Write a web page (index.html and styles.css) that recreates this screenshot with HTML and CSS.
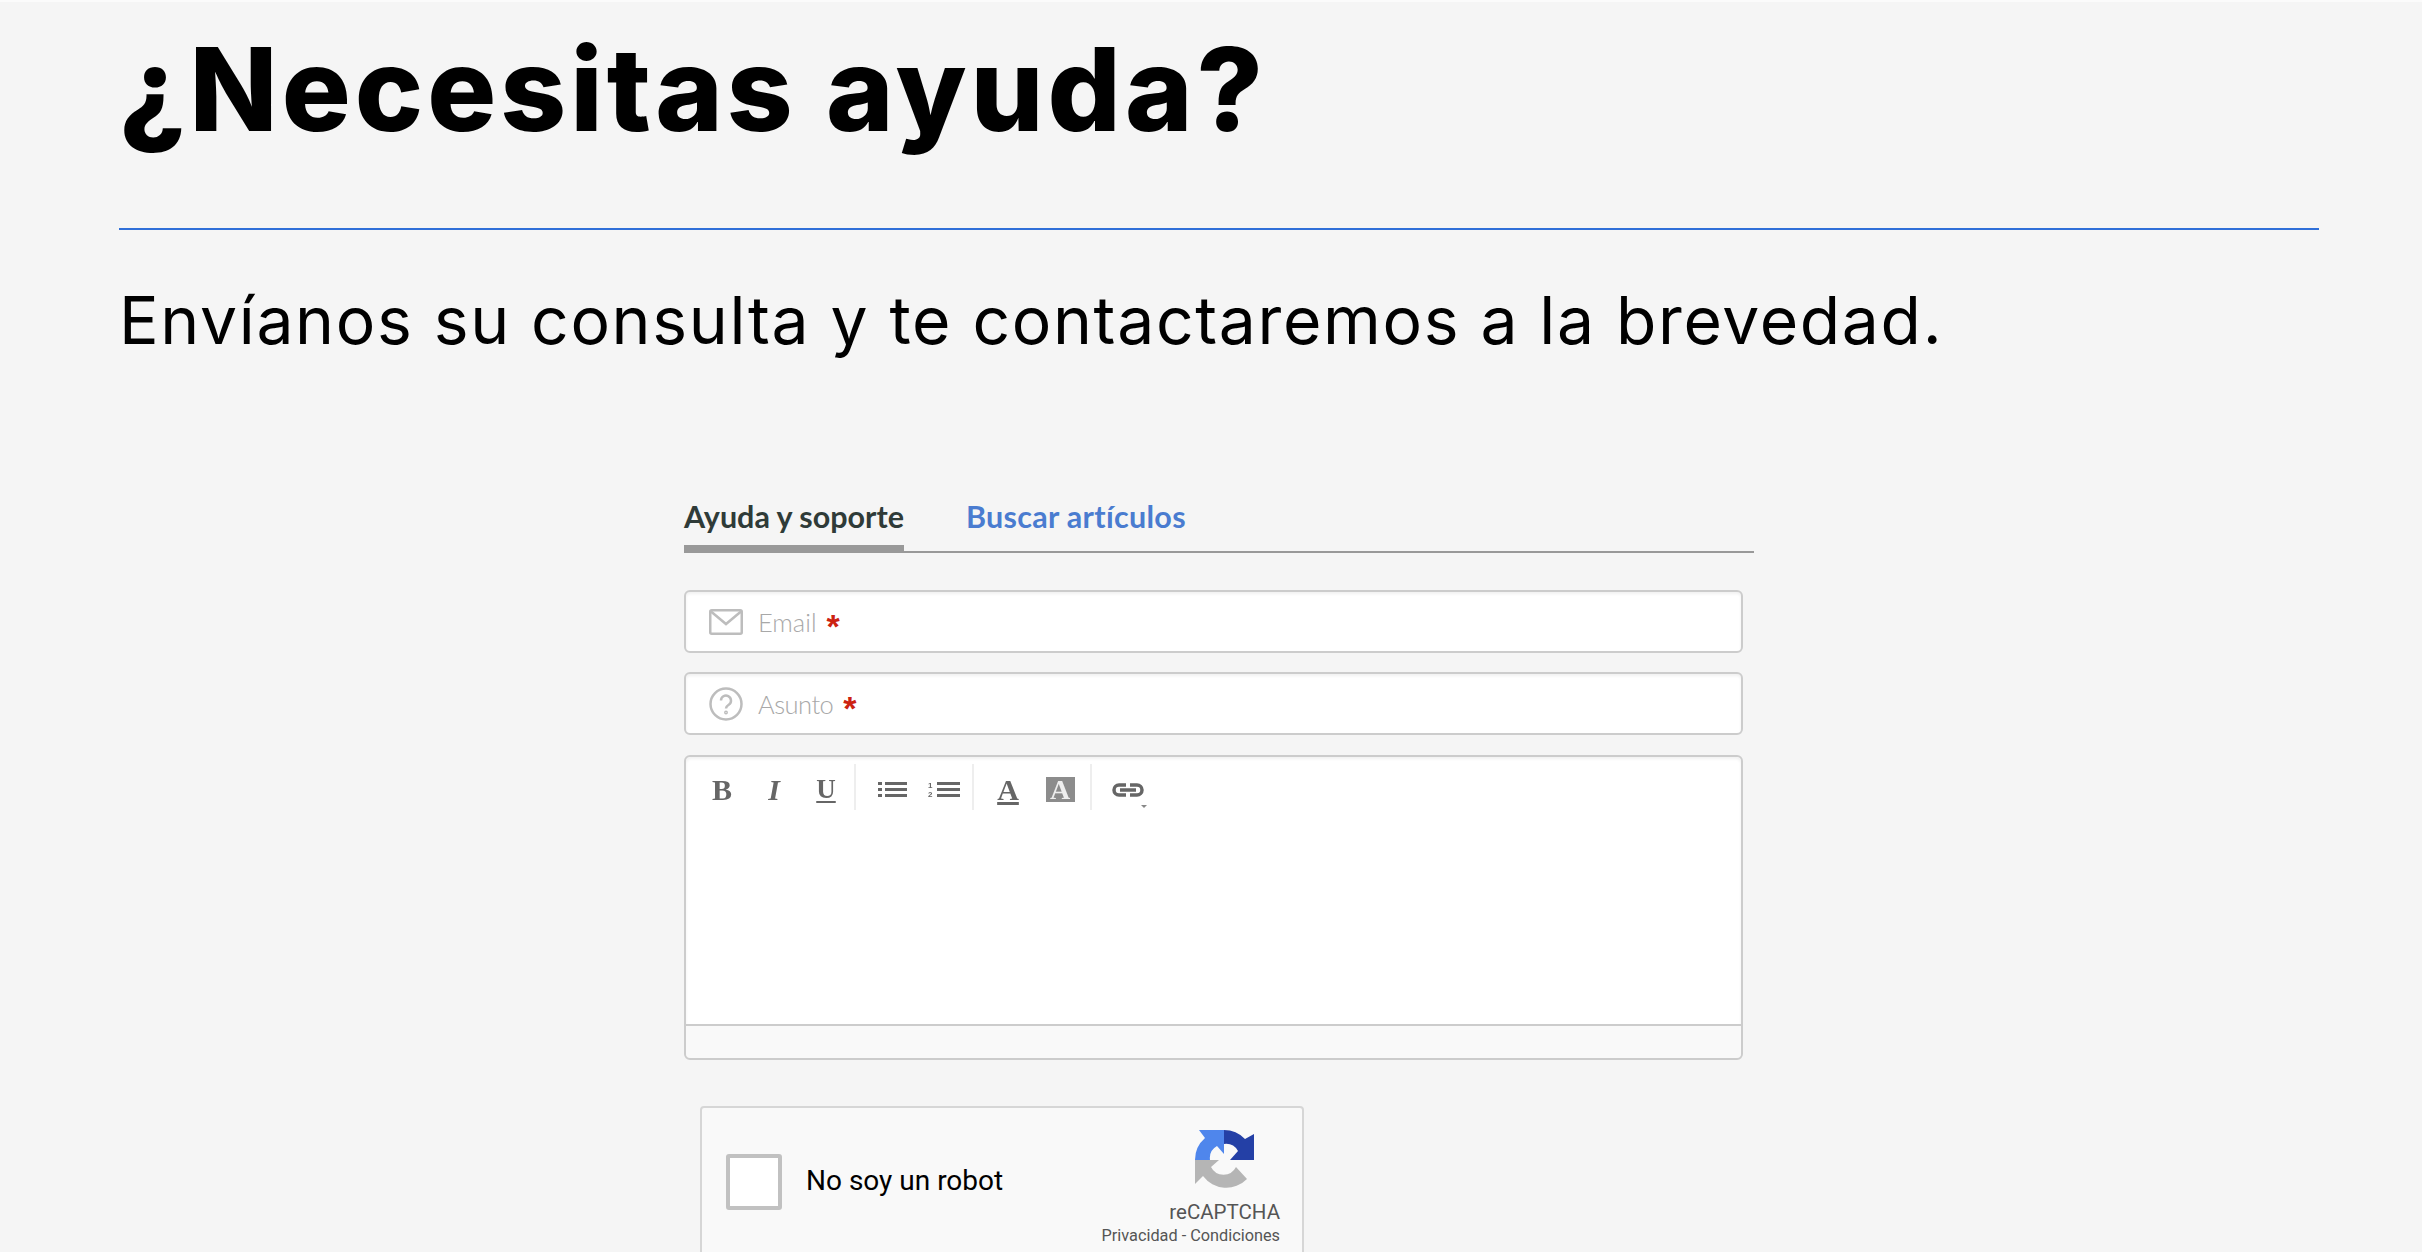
FILE: index.html
```html
<!DOCTYPE html>
<html lang="es">
  <head>
    <meta charset="utf-8">
    <title>¿Necesitas ayuda?</title>
    <link rel="stylesheet" href="styles.css">
  </head>
  <body>
    <div class="intro">
      <h1 class="title">¿Necesitas ayuda?</h1>
      <div class="rule"></div>
      <p class="lead">Envíanos su consulta y te contactaremos a la brevedad.</p>
    </div>

    <div class="widget">
      <div class="tabs">
        <div class="tab tab-active">Ayuda y soporte</div>
        <div class="tab tab-link">Buscar artículos</div>
      </div>

      <div class="field">
        <svg class="field-icon" width="34" height="26" viewBox="0 0 34 26" fill="none" stroke="#bdbdbd" stroke-width="2.500">
          <rect x="1.250" y="1.250" width="31.500" height="23.500" rx="1.500"/>
          <path d="M2 2.500 17 15 32 2.500"/>
        </svg>
        <span class="placeholder">Email</span>
        <span class="req">*</span>
      </div>
      <div class="field">
        <svg class="field-icon" width="34" height="34" viewBox="0 0 34 34" fill="none" stroke="#bdbdbd" stroke-width="2.500">
          <circle cx="17" cy="17" r="15.500"/>
          <path d="M12 13.500a5 5 0 1 1 8 4c-1.800 1.200-3 2-3 4"/>
          <circle cx="17" cy="25.500" r="0.700"/>
        </svg>
        <span class="placeholder placeholder-tight">Asunto</span>
        <span class="req">*</span>
      </div>

      <div class="editor">
        <div class="editor-area">
          <div class="toolbar">
            <div class="tool-group group-first">
              <span class="tool tool-letter">B</span>
              <span class="tool tool-letter tool-italic">I</span>
              <span class="tool tool-letter tool-under">U</span>
            </div>
            <div class="tool-group group-list">
              <span class="tool">
                <svg width="29" height="17" viewBox="0 0 29 17" fill="#666">
                  <rect x="0" y="1" width="4" height="3"/><rect x="7" y="1" width="22" height="3"/>
                  <rect x="0" y="7" width="4" height="3"/><rect x="7" y="7" width="22" height="3"/>
                  <rect x="0" y="13" width="4" height="3"/><rect x="7" y="13" width="22" height="3"/>
                </svg>
              </span>
              <span class="tool">
                <svg width="32" height="17" viewBox="0 0 32 17" fill="#666">
                  <text x="0" y="7" font-family="Liberation Sans" font-size="8" font-weight="700">1</text>
                  <text x="0" y="16" font-family="Liberation Sans" font-size="8" font-weight="700">2</text>
                  <rect x="9" y="1" width="23" height="3"/><rect x="9" y="7" width="23" height="3"/>
                  <rect x="9" y="13" width="23" height="3"/>
                </svg>
              </span>
            </div>
            <div class="tool-group group-color">
              <span class="tool tool-letter tool-fore">A</span>
              <span class="tool"><span class="tool-back">A</span></span>
            </div>
            <div class="tool-group group-link">
              <span class="tool">
                <svg width="34" height="16" viewBox="0 0 34 16" fill="none" stroke="#666" stroke-width="3.500">
                  <path d="M15 3H8a5 5 0 0 0 0 10h7"/>
                  <path d="M19 3h7a5 5 0 0 1 0 10h-7"/>
                  <path d="M9 8h16"/>
                </svg>
                <span class="caret"></span>
              </span>
            </div>
          </div>
        </div>
        <div class="editor-foot"></div>
      </div>

      <div class="captcha">
        <div class="captcha-check"></div>
        <div class="captcha-label">No soy un robot</div>
        <div class="captcha-brand">
          <svg class="captcha-logo" width="60" height="58" viewBox="0 0 60 58">
            <path fill="#b5b5b5" d="M0 54V30H24L16 37A14 14 0 0 0 41 37L52 49A29 29 0 0 1 8 46Z"/>
            <path fill="#4f86ec" d="M0 30A29 29 0 0 1 10 8L4 0H29V24L22 16A14 14 0 0 0 15 30Z"/>
            <path fill="#2440a6" d="M29 0A29 29 0 0 1 50 9L59 4V30H35L43 21A14 14 0 0 0 29 14Z"/>
          </svg>
          <div class="captcha-name">reCAPTCHA</div>
          <div class="captcha-terms">Privacidad - Condiciones</div>
        </div>
      </div>
    </div>
  </body>
</html>
```

FILE: styles.css
```css
html, body {
  margin: 0;
  height: 1252px;
  overflow: hidden;
}

body {
  background: #f5f5f5;
  border-top: 2px solid #fbfbfb;
  box-sizing: border-box;
  font-family: "Inter", "Liberation Sans", sans-serif;
}

.intro {
  padding: 0 103px 0 119px;
}

.title {
  margin: 0;
  padding-top: 19px;
  font-size: 115px;
  line-height: 138px;
  font-weight: 800;
  color: #000;
  letter-spacing: 4px;
}

.rule {
  margin-top: 69px;
  height: 2px;
  background: #2f6fd8;
}

.lead {
  margin: 51px 0 0;
  font-size: 66px;
  line-height: 78px;
  font-weight: 400;
  color: #000;
  letter-spacing: 1.650px;
}

.widget {
  margin: 130px 0 0 684px;
  width: 1070px;
  font-family: "Lato", "Noto Sans", sans-serif;
}

.tabs {
  display: flex;
  gap: 62px;
  height: 64px;
  border-bottom: 2px solid #999;
  box-sizing: border-box;
}

.tab {
  font-size: 30.500px;
  line-height: 54px;
  font-weight: 700;
}

.tab-active {
  color: #2f3b38;
  height: 64px;
  border-bottom: 8px solid #999;
  box-sizing: border-box;
}

.tab-link {
  color: #4a7cd0;
  letter-spacing: 0.300px;
}

.field {
  display: flex;
  align-items: center;
  width: 1059px;
  height: 63px;
  margin-top: 19px;
  padding-left: 23px;
  background: #fff;
  border: 2px solid #ccc;
  border-radius: 6px;
  box-shadow: inset 0 2px 3px rgba(0, 0, 0, 0.06);
  box-sizing: border-box;
}

.tabs + .field {
  margin-top: 37px;
}

.field-icon {
  margin-right: 15px;
}

.placeholder {
  font-size: 25.500px;
  font-weight: 300;
  color: #a8a8a8;
}

.placeholder-tight {
  letter-spacing: -0.500px;
}

.req {
  margin-left: 10px;
  padding-top: 9px;
  color: #cc2211;
  font-family: "Liberation Sans", sans-serif;
  font-size: 34px;
  font-weight: 700;
}

.editor {
  width: 1059px;
  margin-top: 20px;
  border: 2px solid #ccc;
  border-radius: 6px;
  box-sizing: border-box;
}

.editor-area {
  height: 269px;
  background: #fff;
  border-bottom: 2px solid #ccc;
  border-radius: 5px 5px 0 0;
  box-shadow: inset 0 2px 3px rgba(0, 0, 0, 0.06);
  box-sizing: border-box;
  padding: 7px 0 0 10px;
}

.editor-foot {
  height: 32px;
  background: #f9f9f9;
  border-radius: 0 0 5px 5px;
}

.toolbar {
  display: flex;
}

.tool-group {
  display: flex;
  height: 46px;
  box-sizing: border-box;
  border-right: 2px solid #eee;
  filter: blur(0.6px);
}

.group-first {
  width: 160px;
}

.group-list {
  width: 118px;
  padding-left: 10px;
}

.group-color {
  width: 118px;
  padding-left: 8px;
}

.group-link {
  border-right: 0;
  padding-left: 10px;
}

.tool {
  position: relative;
  display: flex;
  align-items: center;
  justify-content: center;
  width: 52px;
  height: 46px;
  padding-top: 5px;
  box-sizing: border-box;
}

.tool-letter {
  font-family: "Liberation Serif", serif;
  font-size: 30px;
  font-weight: 700;
  color: #666;
}

.tool-italic {
  font-style: italic;
}

.tool-under {
  font-size: 27px;
  text-decoration: underline;
  text-underline-offset: 3px;
}

.tool-fore {
  text-decoration: underline;
  text-decoration-thickness: 3px;
  text-underline-offset: 2px;
}

.tool-back {
  display: block;
  width: 29px;
  height: 25px;
  background: #8c8c8c;
  color: #eee;
  font-family: "Liberation Serif", serif;
  font-size: 28px;
  font-weight: 700;
  line-height: 26px;
  text-align: center;
}

/* small dropdown marker under the link icon */
.caret {
  position: absolute;
  left: 39px;
  top: 41px;
  border-left: 3px solid transparent;
  border-right: 3px solid transparent;
  border-top: 3px solid #888;
}

.captcha {
  display: flex;
  align-items: flex-start;
  width: 604px;
  height: 200px;
  margin: 46px 0 0 16px;
  background: #f9f9f9;
  border: 2px solid #d6d6d6;
  border-radius: 4px;
  box-sizing: border-box;
  font-family: "Roboto", sans-serif;
}

.captcha-check {
  width: 56px;
  height: 56px;
  margin: 46px 0 0 24px;
  background: #fff;
  border: 4px solid #c1c1c1;
  border-radius: 3px;
  box-sizing: border-box;
}

.captcha-label {
  margin: 56px 0 0 24px;
  font-size: 28px;
  line-height: 34px;
  color: #000;
}

.captcha-brand {
  margin-left: auto;
  padding: 22px 22px 0 0;
  text-align: right;
}

.captcha-logo {
  display: block;
  margin: 0 25px 0 auto;
}

.captcha-name {
  margin-top: 11px;
  font-size: 20.500px;
  line-height: 26px;
  color: #555;
}

.captcha-terms {
  font-size: 16.300px;
  line-height: 22px;
  color: #555;
}
```
